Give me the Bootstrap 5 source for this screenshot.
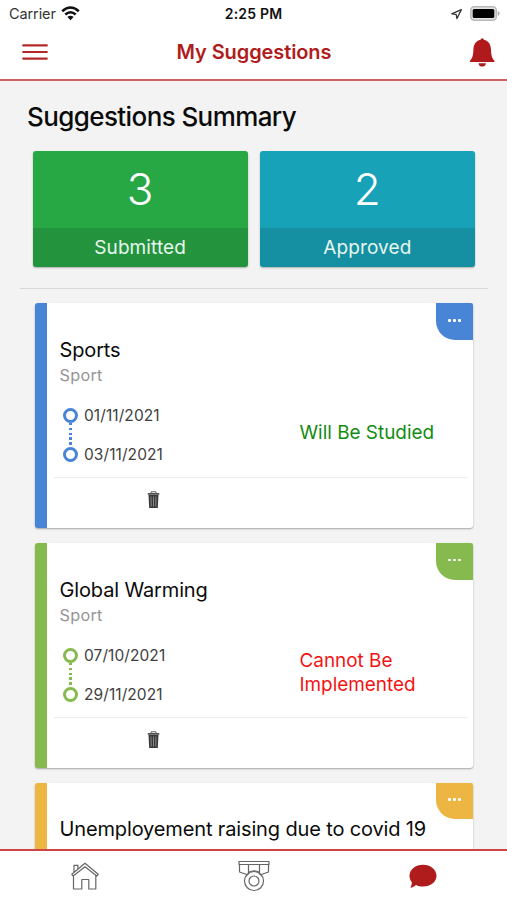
<!DOCTYPE html>
<html lang="en">
<head>
<meta charset="utf-8">
<meta name="viewport" content="width=device-width, initial-scale=1">
<title>My Suggestions</title>
<link href="https://cdn.jsdelivr.net/npm/bootstrap@5.3.0/dist/css/bootstrap.min.css" rel="stylesheet">
<style>
  body { font-family: Inter, "Liberation Sans", sans-serif; color: #111; background: #f3f3f3; }
  .screen { height: 900px; }
  svg { display: block; flex: none; }
  .status-bar { height: 27px; font-size: 14.5px; line-height: 27px; padding: 0 7px 0 9px; }
  .status-bar > * { flex: 1 1 0; }
  .carrier { letter-spacing: -.1px; color: #333; }
  .clock { font-size: 14px; letter-spacing: .2px; padding-right: 2px; line-height: 28px; }
  .wifi { margin-top: -1px; }
  .title-bar { height: 54px; border-bottom: 2px solid #cb6263; padding: 0 12px 2px 22px; color: #b01c1c; }
  .title-bar h1 { font-size: 20px; letter-spacing: -.1px; line-height: 50px; padding-right: 9px; }
  .content { padding: 0 19px 0 20px; min-height: 0; }
  .summary-title { font-size: 26px; line-height: 32px; letter-spacing: -.6px; margin: 20px 0 18.4px 7px; color: #0b0b0b; }
  .tiles { padding: 0 13px 0 12.5px; gap: 12px; margin-bottom: 20.5px; }
  .tile { flex: 1 1 0; height: 116px; border: 0; border-radius: 3px; color: #fff; overflow: hidden; box-shadow: 0 1px 2px rgba(0,0,0,.28); }
  .tile-green { background: #28a745; }
  .tile-teal { background: #18a2b8; }
  .tile-num { height: 77px; font-size: 44px; line-height: 76px; font-weight: 300; }
  .tile-label { height: 39px; line-height: 40px; font-size: 19px; letter-spacing: .1px; background: rgba(0,0,0,.11); font-weight: 400; color: #e6f6ee; }
  .rule { height: 1px; background: #d9d9d9; margin-bottom: 14.6px; }
  .idea { height: 225px; margin: 0 15px 14.7px; border: 0; border-left: 12.5px solid var(--tone); border-radius: 3px; box-shadow: 0 1px 2px rgba(0,0,0,.32); padding: 32.500px 6px 0 0; }
  .tone-blue { --tone: #4985d6; }
  .tone-green { --tone: #87ba4e; }
  .tone-amber { --tone: #edb541; }
  .corner { position: absolute; top: 0; right: 0; width: 37px; height: 36.5px; padding-bottom: 3px; gap: 2.3px; background: var(--tone); border-radius: 0 2px 0 19px; }
  .corner i { width: 2.8px; height: 2.8px; background: #fff; border-radius: 1px; }
  .idea h3 { font-size: 20px; line-height: 28px; margin: 0 0 0 12.5px; font-weight: 400; letter-spacing: -.14px; color: #0b0b0b; white-space: nowrap; }
  .topic { font-size: 16.3px; line-height: 23.5px; margin-left: 12.5px; letter-spacing: .25px; color: #949496; }
  .dates { width: 236px; padding: 9px 0 0 16px; font-size: 15.5px; letter-spacing: .08px; color: #404040; }
  .date-row { height: 39px; gap: 6px; line-height: 39px; }
  .ring { width: 15px; height: 15px; border: 3px solid var(--tone); border-radius: 50%; }
  .date-row + .date-row .ring { position: relative; }
  .date-row + .date-row .ring::before { content: ""; position: absolute; left: 3px; bottom: 12px; width: 2.600px; height: 24px; background: repeating-linear-gradient(var(--tone) 0 2.500px, transparent 2.500px 4.800px); }
  .verdict { font-size: 18.9px; line-height: 23.5px; width: 160px; padding-top: 4px; margin-right: 7.5px; }
  .verdict.ok { color: #128c12; }
  .verdict.no { color: #f21414; }
  .card-line { height: 1px; background: #ececec; margin: 3px 0 12.5px 7px; }
  .trash { margin-left: 100px; }
  .tab-bar { height: 51px; border-top: 2px solid #c44; background: #fff; }
</style>
</head>
<body>
<div class="screen d-flex flex-column overflow-hidden">
  <header class="bg-white">
    <div class="status-bar d-flex">
      <div class="d-flex align-items-center"><span class="carrier">Carrier</span>
        <svg class="wifi ms-1" width="21" height="17" viewBox="0 0 21 17" fill="none" stroke="#111" stroke-width="2.6"><path d="M2.2 6.2Q10.5-1.2 18.800 6.2M5.300 9.500Q10.500 5 15.700 9.500"/><path d="M7.400 12Q10.500 9.300 13.600 12L10.500 15.200z" fill="#111" stroke="none"/></svg>
      </div>
      <div class="clock text-center fw-semibold text-nowrap">2:25 PM</div>
      <div class="d-flex justify-content-end align-items-center gap-2">
        <svg width="11" height="12" viewBox="0 0 12 12" fill="none" stroke="#333" stroke-width="1.400" stroke-linejoin="round"><path d="M11.300 1.200L.8 5.800l4.800.6.900 4.600z"/></svg>
        <svg width="30" height="15" viewBox="0 0 30 15"><rect x=".8" y=".8" width="25.500" height="13.400" rx="3.500" fill="#e4e4e4" stroke="#b9b9b9" stroke-width="1.500"/><rect x="2.700" y="2.900" width="21.600" height="9.200" rx="1.500" fill="#000"/><path d="M27.800 5v5q1.800-.8 1.800-2.500T27.800 5" fill="#aaa"/></svg>
      </div>
    </div>
    <div class="title-bar d-flex align-items-center justify-content-between">
      <svg width="26" height="17" viewBox="0 0 26 17" stroke="#b42a2a" stroke-width="2.200" stroke-linecap="round"><path d="M1.200 1.400h23.600M1.200 8h23.600M1.200 14.600h23.600"/></svg>
      <h1 class="m-0 fw-semibold">My Suggestions</h1>
      <svg width="26" height="29" viewBox="0 0 26 29" fill="#b01a1c"><path d="M13.200.3q1.400 0 1.700 1.500C19.500 2.800 21.800 6.500 22 11.500c.2 6 1 8.700 3.400 11.300v1.200H1v-1.200C3.400 20.200 4.200 17.500 4.400 11.500 4.600 6.500 6.900 2.800 11.500 1.800q.3-1.500 1.700-1.500zM9.400 25.200H17q-.6 3.400-3.800 3.400t-3.800-3.400z"/></svg>
    </div>
  </header>

  <main class="content flex-grow-1 overflow-hidden">
    <h2 class="summary-title fw-medium">Suggestions Summary</h2>
    <div class="tiles d-flex text-center">
      <div class="tile tile-green"><div class="tile-num">3</div><div class="tile-label">Submitted</div></div>
      <div class="tile tile-teal"><div class="tile-num">2</div><div class="tile-label">Approved</div></div>
    </div>
    <div class="rule"></div>

    <article class="card idea tone-blue">
      <div class="corner d-flex justify-content-center align-items-center"><i></i><i></i><i></i></div>
      <h3>Sports</h3>
      <div class="topic">Sport</div>
      <div class="d-flex align-items-center">
        <div class="dates">
          <div class="date-row d-flex align-items-center"><span class="ring"></span>01/11/2021</div>
          <div class="date-row d-flex align-items-center"><span class="ring"></span>03/11/2021</div>
        </div>
        <div class="verdict ok ms-auto">Will Be Studied</div>
      </div>
      <div class="card-line"></div>
      <svg class="trash" width="13" height="18" viewBox="0 0 13 18"><path d="M4 2V.8h5V2" fill="none" stroke="#666"/><path d="M.7 2h11.600v1.800H.7z" fill="#555"/><path d="M1.500 4h10L10.800 17H2.200z" fill="#3a3a3a"/><path d="M4 5.500l.3 10M6.500 5.500v10M9 5.500l-.3 10" stroke="#999" stroke-width=".8"/></svg>
    </article>

    <article class="card idea tone-green">
      <div class="corner d-flex justify-content-center align-items-center"><i></i><i></i><i></i></div>
      <h3>Global Warming</h3>
      <div class="topic">Sport</div>
      <div class="d-flex align-items-center">
        <div class="dates">
          <div class="date-row d-flex align-items-center"><span class="ring"></span>07/10/2021</div>
          <div class="date-row d-flex align-items-center"><span class="ring"></span>29/11/2021</div>
        </div>
        <div class="verdict no ms-auto">Cannot Be Implemented</div>
      </div>
      <div class="card-line"></div>
      <svg class="trash" width="13" height="18" viewBox="0 0 13 18"><path d="M4 2V.8h5V2" fill="none" stroke="#666"/><path d="M.7 2h11.600v1.800H.7z" fill="#555"/><path d="M1.500 4h10L10.800 17H2.200z" fill="#3a3a3a"/><path d="M4 5.500l.3 10M6.500 5.500v10M9 5.500l-.3 10" stroke="#999" stroke-width=".8"/></svg>
    </article>

    <article class="card idea tone-amber">
      <div class="corner d-flex justify-content-center align-items-center"><i></i><i></i><i></i></div>
      <h3>Unemployement raising due to covid 19</h3>
    </article>
  </main>

  <nav class="tab-bar row g-0 align-items-center flex-shrink-0">
    <div class="col d-flex justify-content-center">
      <svg width="28" height="29" viewBox="0 0 28 29" fill="none" stroke="#666" stroke-width="1.200" stroke-linejoin="round"><path d="M2.500 14V28h8.300V18.500h7V28h7V14M14 5.800L2.200 15 .8 13.300 14 2.200l13.200 11.100L25.800 15zM3 11.300V4.300h3.800v3.600M2.500 4.300h5"/></svg>
    </div>
    <div class="col d-flex justify-content-center">
      <svg width="32" height="32" viewBox="0 0 32 32" fill="none" stroke="#666" stroke-width="1.200" stroke-linejoin="round"><path d="M1 1.500h30v3H1zM1.500 4.500V12l8.500 3M30.500 4.500V12L22 15M10.500 4.500V14.500M21.500 4.500V14.500M10.500 12.300q5.500-3 11 0"/><circle cx="16" cy="21" r="9.500"/><circle cx="16" cy="21" r="5"/></svg>
    </div>
    <div class="col d-flex justify-content-center">
      <svg width="28" height="24" viewBox="0 0 28 24" fill="#b01c1c"><path d="M14 .8c7.500 0 13.500 4.800 13.500 11S21.500 22.600 14 22.600c-2.800 0-5-.6-7-1.600-1.500 1.600-3.500 2.500-5.600 2.700 1-1.600 1.500-3.400 1.400-5.600C1.200 16.300.5 14.100.5 11.800.5 5.600 6.500.8 14 .8z"/></svg>
    </div>
  </nav>
</div>
<script src="https://cdn.jsdelivr.net/npm/bootstrap@5.3.0/dist/js/bootstrap.bundle.min.js"></script>
</body>
</html>
